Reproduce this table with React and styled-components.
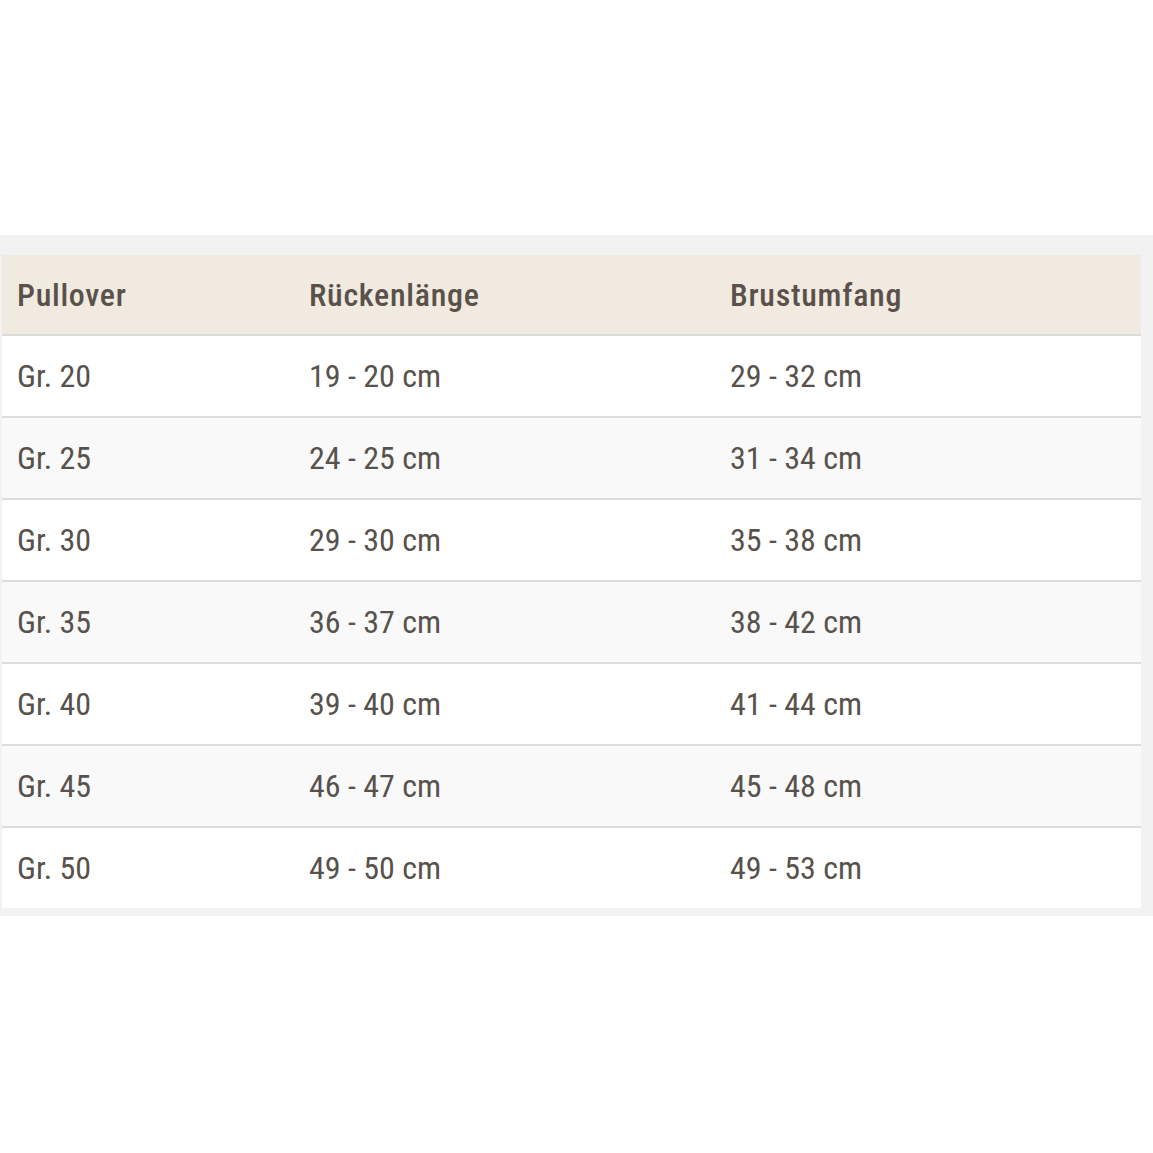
import React from 'react';
import styled, {createGlobalStyle} from 'styled-components';

const GlobalStyle = createGlobalStyle`
  html, body {
    margin: 0;
    padding: 0;
    background: #ffffff;
  }
  body {
    font-family: "Roboto Condensed", Roboto, "Liberation Sans", sans-serif;
    font-stretch: condensed;
  }
`;

const rows = [
  ['Gr. 20', '19 - 20 cm', '29 - 32 cm'],
  ['Gr. 25', '24 - 25 cm', '31 - 34 cm'],
  ['Gr. 30', '29 - 30 cm', '35 - 38 cm'],
  ['Gr. 35', '36 - 37 cm', '38 - 42 cm'],
  ['Gr. 40', '39 - 40 cm', '41 - 44 cm'],
  ['Gr. 45', '46 - 47 cm', '45 - 48 cm'],
  ['Gr. 50', '49 - 50 cm', '49 - 53 cm'],
];

const Page = styled.div`
  padding-top: 235px;
  height: 1153px;
  box-sizing: border-box;
`;

const Frame = styled.div`
  background: #f2f2f2;
  padding: 20px 12px 8px 2px;
`;

const Table = styled.table`
  width: 100%;
  border-collapse: collapse;
  table-layout: fixed;
`;

const HeadRow = styled.tr`
  background: #f0eae1;
  border-bottom: 2px solid #dcdad7;
`;

const Row = styled.tr`
  background: ${p => (p.$odd ? '#f9f9f9' : '#ffffff')};
  border-bottom: ${p => (p.$last ? 'none' : '2px solid #dddddd')};
`;

const Th = styled.th`
  box-sizing: border-box;
  width: ${p => p.$w || 'auto'};
  height: 80px;
  padding: 0 16px 0 15px;
  text-align: left;
  font-size: 32px;
  font-weight: 500;
  letter-spacing: 0.7px;
  color: #5a514a;
  white-space: nowrap;
`;

const Td = styled.td`
  height: 80px;
  padding: 0 16px 0 15px;
  font-size: 32px;
  font-weight: 400;
  color: #58524d;
  white-space: nowrap;
`;

export default function App() {
  return (
    <Page>
      <GlobalStyle />
      <Frame>
        <Table>
          <thead>
            <HeadRow>
              <Th $w="292px">Pullover</Th>
              <Th $w="421px">Rückenlänge</Th>
              <Th>Brustumfang</Th>
            </HeadRow>
          </thead>
          <tbody>
            {rows.map((r, i) => (
              <Row key={r[0]} $odd={i % 2 === 1} $last={i === rows.length - 1}>
                {r.map(c => <Td key={c}>{c}</Td>)}
              </Row>
            ))}
          </tbody>
        </Table>
      </Frame>
    </Page>
  );
}
